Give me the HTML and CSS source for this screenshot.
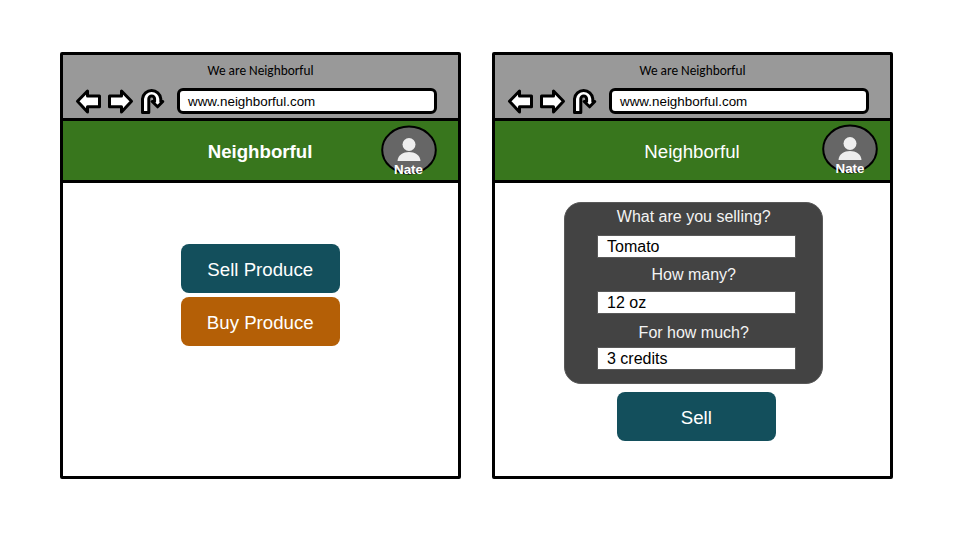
FILE: index.html
```html
<!DOCTYPE html>
<html lang="en">
<head>
<meta charset="utf-8">
<title>Neighborful</title>
<link rel="stylesheet" href="styles.css">
</head>
<body>
<svg class="defs" aria-hidden="true">
  <symbol id="nav" viewBox="75 87 92 28">
    <g fill="#fff" stroke="#000" stroke-width="3" stroke-linejoin="round">
      <path d="M77.5 101.3 87.5 91V96H99.5V106.7H87.5V112Z"/>
      <path d="M131.5 101.3 121.5 91V96H109.5V106.7H121.5V112Z"/>
      <path d="M142.5 112.5V98.8A9.2 9.2 0 0 1 160.8 98.8V101.5H162.8L157.6 106.8 152.2 101.5H154.6V98.8A2.9 2.9 0 0 0 148.8 98.8V112.5Z"/>
    </g>
  </symbol>
  <symbol id="person" viewBox="0 0 56 50">
    <ellipse cx="28" cy="25" rx="26.8" ry="23.5" fill="#666" stroke="#000" stroke-width="2"/>
    <circle cx="28" cy="19.5" r="6.5" fill="#eee"/>
    <path d="M16.5 36C17 24 39 24 39.5 36Z" fill="#eee"/>
  </symbol>
</svg>
<main class="board">
  <section class="window">
    <header class="chrome">
      <div class="caption">We are Neighborful</div>
      <div class="toolbar">
        <svg class="nav"><use href="#nav"/></svg>
        <div class="url">www.neighborful.com</div>
      </div>
    </header>
    <div class="banner">
      <h1 class="brand brand-bold">Neighborful</h1>
      <div class="avatar"><svg class="portrait"><use href="#person"/></svg><span class="name">Nate</span></div>
    </div>
    <div class="content home">
      <div class="button">Sell Produce</div>
      <div class="button button-buy">Buy Produce</div>
    </div>
  </section>
  <section class="window">
    <header class="chrome">
      <div class="caption">We are Neighborful</div>
      <div class="toolbar">
        <svg class="nav"><use href="#nav"/></svg>
        <div class="url">www.neighborful.com</div>
      </div>
    </header>
    <div class="banner">
      <h1 class="brand">Neighborful</h1>
      <div class="avatar avatar-sell"><svg class="portrait"><use href="#person"/></svg><span class="name">Nate</span></div>
    </div>
    <div class="content sell">
      <div class="form">
        <div class="label">What are you selling?</div>
        <div class="field">Tomato</div>
        <div class="label">How many?</div>
        <div class="field">12 oz</div>
        <div class="label label-price">For how much?</div>
        <div class="field">3 credits</div>
      </div>
      <div class="button">Sell</div>
    </div>
  </section>
</main>
</body>
</html>
```
FILE: styles.css
```css
* { box-sizing: border-box; }
body {
  margin: 0;
  background: #fff;
  font-family: "Liberation Sans", Arial, sans-serif;
}
.defs { position: absolute; width: 0; height: 0; }
.board {
  display: flex;
  gap: 31px;
  width: 960px;
  height: 540px;
  padding: 52px 0 0 60px;
}
.window {
  width: 401px;
  height: 427px;
  border: 3px solid #000;
  border-radius: 2px;
  background: #fff;
}
.chrome {
  height: 66px;
  padding-top: 7px;
  background: #999;
  border-bottom: 3px solid #000;
}
.caption {
  height: 18px;
  font: 13.33px/18px Carlito, "Open Sans", sans-serif;
  text-align: center;
  white-space: nowrap;
}
.toolbar { display: flex; padding: 8px 0 0 12px; }
.nav { width: 92px; height: 28px; margin-top: -1px; }
.url {
  width: 260px;
  height: 26px;
  margin-left: 10px;
  padding-left: 8px;
  border: 3px solid #000;
  border-radius: 6px;
  background: #fff;
  font-size: 13.4px;
  line-height: 21px;
}
.banner {
  display: grid;
  grid-template-columns: 317px 56px;
  height: 62px;
  background: #38761d;
  border-bottom: 3px solid #000;
}
.brand {
  margin: 0;
  padding-left: 77px;
  color: #fff;
  font-size: 18.67px;
  font-weight: 400;
  line-height: 61px;
  text-align: center;
}
.brand-bold { font-weight: 700; }
.avatar { position: relative; height: 50px; margin: 4px 0 0 0.5px; }
.avatar-sell { margin: 3px 0 0 10px; width: 56px; }
.window .portrait { display: block; width: 56px; height: 50px; }
.name {
  position: absolute;
  left: 0;
  top: 37px;
  width: 56px;
  color: #fff;
  font-size: 13.33px;
  font-weight: 700;
  line-height: 15px;
  text-align: center;
}
.content { display: flex; flex-direction: column; }
.home { padding: 61px 0 0 117.5px; gap: 3.5px; }
.sell { padding-top: 19px; }
.button {
  flex: none;
  width: 159.5px;
  height: 49px;
  border-radius: 8px;
  background: #134f5c;
  color: #fff;
  font-size: 18.67px;
  line-height: 51px;
  text-align: center;
}
.button-buy { background: #b45f06; }
.sell .button { margin: 8px 0 0 121.5px; }
.form {
  display: grid;
  grid-template-rows: 32px 23px 33px 23px 33px 23px;
  width: 259px;
  height: 182px;
  margin-left: 69px;
  padding: 0 26px 0 32px;
  border: 1px solid #595959;
  border-radius: 17px;
  background: #434343;
}
.label {
  padding-right: 5.5px;
  color: #f3f3f3;
  font-size: 16px;
  line-height: 27px;
  text-align: center;
}
.label + .field { line-height: 22px; }
.field + .label { line-height: 33px; }
.field + .label-price { line-height: 37px; }
.field {
  width: 199px;
  padding-left: 9px;
  border: 1px solid #595959;
  background: #fff;
  color: #000;
  font-size: 16px;
}
```
